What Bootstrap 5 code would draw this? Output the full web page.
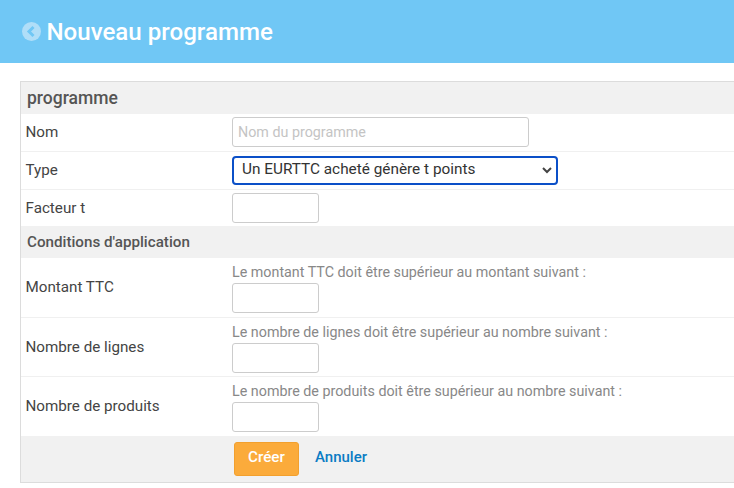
<!DOCTYPE html>
<html lang="fr">
<head>
    <meta charset="UTF-8">
    <meta name="viewport" content="width=device-width, initial-scale=1.0">
    <title>Nouveau programme</title>
    <link href="https://cdn.jsdelivr.net/npm/bootstrap@5.3.0/dist/css/bootstrap.min.css" rel="stylesheet">
    <script src="https://cdn.jsdelivr.net/npm/bootstrap@5.3.0/dist/js/bootstrap.bundle.min.js"></script>
    <style>
        body {
            font-family: Roboto, "Liberation Sans", sans-serif;
            font-size: 15.2px;
            color: #444;
            overflow-x: hidden;
        }
        .page-head {
            background: #70c7f5;
            height: 63px;
            padding-left: 22px;
        }
        .page-head h1 {
            font-size: 24.1px;
            font-weight: 500;
            color: #fff;
            margin: 0 0 0 5.5px;
            padding-top: 1px;
            line-height: 1;
        }
        .prog-panel {
            margin: 18px 0 0 20px;
            border: 1px solid #dcdcdc;
            border-right: 0;
        }
        .prog-title {
            background: #f1f1f1;
            font-weight: 500;
            color: #555;
            height: 32px;
            padding-left: 6px;
        }
        .prog-title.big { font-size: 17.5px; }
        .prog-row {
            height: 38px;
            border-bottom: 1px solid #f0f0f0;
        }
        .prog-row.tall { height: 59px; }
        .prog-row.tall-first { height: 60px; }
        .prog-row.last { border-bottom: 0; }
        .prog-row.short { height: 36px; }
        .prog-label {
            width: 211px;
            padding-left: 4.5px;
            flex-shrink: 0;
        }
        .prog-hint {
            font-size: 14.3px;
            line-height: 14px;
            color: #888;
            margin-bottom: 4px;
        }
        .prog-field { padding-top: 3px; }
        .prog-panel .form-control {
            font-size: 14.3px;
            border-radius: 3px;
            border-color: #ccc;
            height: 30px;
            min-height: 0;
            padding: 2px 5px;
        }
        .prog-panel .form-control::placeholder { color: #c4c4c4; }
        .input-name, .input-short { margin-bottom: 1px; }
        .input-name { width: 297px; }
        .input-num { width: 87px; }
        .prog-panel .form-select {
            width: 326px;
            height: 29px;
            margin-bottom: 1px;
            font-size: 15.35px;
            color: #333;
            padding: 0 0 0 8px;
            border: 2px solid #0b50c8;
            border-radius: 4px;
            background-image: url("data:image/svg+xml,%3csvg xmlns='http://www.w3.org/2000/svg' viewBox='0 0 10 8'%3e%3cpath fill='none' stroke='%23444' stroke-width='2' d='M1 2l4 4 4-4'/%3e%3c/svg%3e");
            background-size: 10px 8px;
            background-position: right 4px center;
            box-shadow: none;
        }
        .prog-foot {
            background: #f1f1f1;
            height: 46px;
            padding-left: 213px;
        }
        .btn-create {
            background: #fbab3b;
            border: 1px solid #f2a02e;
            color: #fff;
            font-size: 15.2px;
            font-weight: 500;
            border-radius: 3px;
            width: 65px;
            height: 34px;
            padding: 0 0 4px;
        }
        .btn-create:hover { background: #f2a02e; color: #fff; }
        .link-cancel {
            color: #0a7cc4;
            font-size: 15px;
            font-weight: 500;
            text-decoration: none;
            margin: 0 0 3px 16px;
        }
    </style>
</head>
<body>

    <div class="page-head d-flex align-items-center">
        <svg width="19" height="19" viewBox="0 0 19 19" aria-hidden="true">
            <circle cx="9.5" cy="9.5" r="9.5" fill="#b0def8"/>
            <path d="M11.5 5 L7 9.5 L11.5 14" fill="none" stroke="#70c7f5" stroke-width="3"/>
        </svg>
        <h1>Nouveau programme</h1>
    </div>

    <form class="prog-panel">
        <div class="prog-title big d-flex align-items-center">programme</div>

        <div class="prog-row d-flex align-items-center">
            <label class="prog-label" for="nom">Nom</label>
            <input type="text" class="form-control input-name" id="nom" placeholder="Nom du programme">
        </div>
        <div class="prog-row d-flex align-items-center">
            <label class="prog-label" for="type">Type</label>
            <select class="form-select" id="type">
                <option>Un EURTTC acheté génère t points</option>
            </select>
        </div>
        <div class="prog-row short last d-flex align-items-center">
            <label class="prog-label" for="facteur">Facteur t</label>
            <input type="text" class="form-control input-num input-short" id="facteur">
        </div>

        <div class="prog-title d-flex align-items-center">Conditions d'application</div>

        <div class="prog-row tall-first d-flex align-items-center">
            <label class="prog-label" for="montant">Montant TTC</label>
            <div class="prog-field">
                <div class="prog-hint">Le montant TTC doit être supérieur au montant suivant :</div>
                <input type="text" class="form-control input-num" id="montant">
            </div>
        </div>
        <div class="prog-row tall d-flex align-items-center">
            <label class="prog-label" for="lignes">Nombre de lignes</label>
            <div class="prog-field">
                <div class="prog-hint">Le nombre de lignes doit être supérieur au nombre suivant :</div>
                <input type="text" class="form-control input-num" id="lignes">
            </div>
        </div>
        <div class="prog-row tall last d-flex align-items-center">
            <label class="prog-label" for="produits">Nombre de produits</label>
            <div class="prog-field">
                <div class="prog-hint">Le nombre de produits doit être supérieur au nombre suivant :</div>
                <input type="text" class="form-control input-num" id="produits">
            </div>
        </div>

        <div class="prog-foot d-flex align-items-center">
            <button type="button" class="btn btn-create">Créer</button>
            <a href="#" class="link-cancel">Annuler</a>
        </div>
    </form>

</body>
</html>
